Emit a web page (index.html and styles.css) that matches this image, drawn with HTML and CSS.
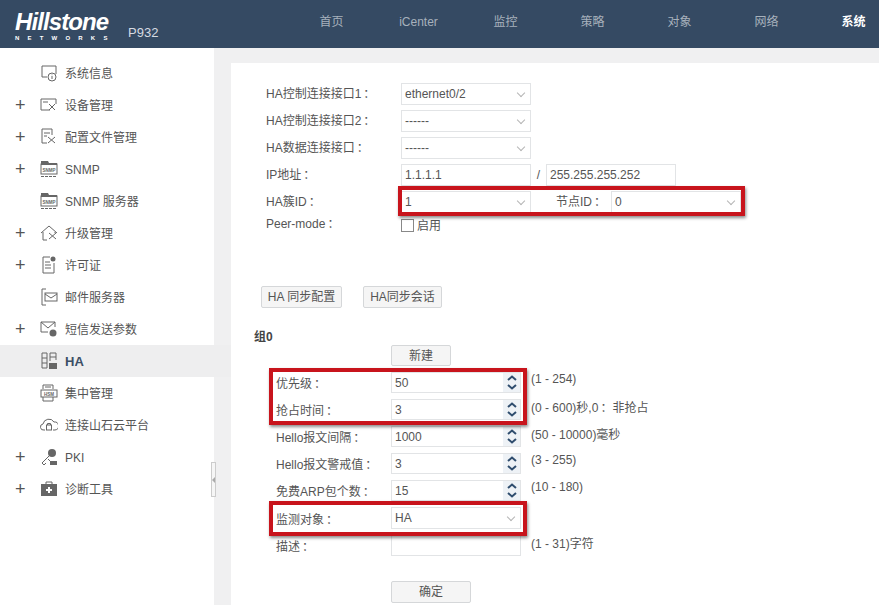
FILE: index.html
```html
<!DOCTYPE html>
<html lang="zh-CN">
<head>
    <meta charset="UTF-8" />
    <title>HA - 系统</title>
    <link rel="stylesheet" href="styles.css">
</head>
<body>
    <header class="topbar">
        <div class="logo">
            <div class="logo-name">Hillstone</div>
            <div class="logo-sub">NETWORKS</div>
        </div>
        <div class="model">P932</div>
        <nav class="nav">
            <a>首页</a>
            <a>iCenter</a>
            <a>监控</a>
            <a>策略</a>
            <a>对象</a>
            <a>网络</a>
            <a class="active">系统</a>
        </nav>
    </header>

    <div class="page">
        <aside class="sidebar">
            <div class="menu-item">
                <span class="plus"></span>
                <svg class="icon" viewBox="0 0 18 18"><path d="M7 13H2V2h14v8"/><circle cx="12" cy="13" r="4"/><path d="M12 12v3M12 10.600v.6"/></svg>
                <span class="menu-text">系统信息</span>
            </div>
            <div class="menu-item">
                <span class="plus">+</span>
                <svg class="icon" viewBox="0 0 18 18"><path d="M16 8V3H1v11h9"/><path d="M3 6h5M9 8l6 6M15 8l-6 6"/></svg>
                <span class="menu-text">设备管理</span>
            </div>
            <div class="menu-item">
                <span class="plus">+</span>
                <svg class="icon" viewBox="0 0 18 18"><path d="M7 15H2V1h10v6"/><path d="M4 5h6M4 8h3M8 9l7 6M15 9l-7 6"/></svg>
                <span class="menu-text">配置文件管理</span>
            </div>
            <div class="menu-item">
                <span class="plus">+</span>
                <svg class="icon" viewBox="0 0 18 18"><path class="solid" d="M1 1h7l1 2h8v2H1z"/><rect x="1" y="4" width="16" height="10"/><path d="M1 16.500h16" stroke-dasharray="3 1"/><text class="icon-text" x="9" y="11.500">SNMP</text></svg>
                <span class="menu-text">SNMP</span>
            </div>
            <div class="menu-item">
                <span class="plus"></span>
                <svg class="icon" viewBox="0 0 18 18"><path class="solid" d="M1 1h7l1 2h8v2H1z"/><rect x="1" y="4" width="16" height="10"/><path d="M1 16.500h16" stroke-dasharray="3 1"/><text class="icon-text" x="9" y="11.500">SNMP</text></svg>
                <span class="menu-text">SNMP 服务器</span>
            </div>
            <div class="menu-item">
                <span class="plus">+</span>
                <svg class="icon" viewBox="0 0 18 18"><path d="M1 9l8-7 8 7M3 8v8h4M15 8v1"/><path d="M9 9l7 6M16 9l-7 6"/></svg>
                <span class="menu-text">升级管理</span>
            </div>
            <div class="menu-item">
                <span class="plus">+</span>
                <svg class="icon" viewBox="0 0 18 18"><path d="M10 1H3v16h11V7"/><path d="M5 6h5M5 9h6M5 12h6"/><circle class="solid" cx="13" cy="3" r="2.500"/></svg>
                <span class="menu-text">许可证</span>
            </div>
            <div class="menu-item">
                <span class="plus"></span>
                <svg class="icon" viewBox="0 0 18 18"><path d="M6 1H2v16h4"/><rect x="5" y="5" width="12" height="8"/><path d="M5 6l6 4 6-4"/></svg>
                <span class="menu-text">邮件服务器</span>
            </div>
            <div class="menu-item">
                <span class="plus">+</span>
                <svg class="icon" viewBox="0 0 18 18"><path d="M8 12H1V2h14v5M1 2l7 6 7-6"/><circle class="solid" cx="13" cy="13" r="3.500"/></svg>
                <span class="menu-text">短信发送参数</span>
            </div>
            <div class="menu-item current">
                <span class="plus"></span>
                <svg class="icon" viewBox="0 0 18 18"><path d="M7 16H2V1h5zM2 6h5M2 11h5M10 9V1h6v7M10 5h6"/><rect class="solid" x="9" y="11" width="8" height="6"/></svg>
                <span class="menu-text">HA</span>
            </div>
            <div class="menu-item">
                <span class="plus"></span>
                <svg class="icon" viewBox="0 0 18 18"><path d="M3 5V1h10v4M3 13v4h10v-4M5 3h6"/><rect x="1" y="6" width="16" height="7"/><text class="icon-text" x="9" y="11.500">HSM</text></svg>
                <span class="menu-text">集中管理</span>
            </div>
            <div class="menu-item">
                <span class="plus"></span>
                <svg class="icon" viewBox="0 0 18 18"><path d="M5 14H4a3 3 0 0 1-1-6 6 6 0 0 1 11-2 4 4 0 0 1 1 8h-2"/><rect x="6.500" y="9" width="5" height="5"/><path d="M7.500 9V7.500h3V9"/></svg>
                <span class="menu-text">连接山石云平台</span>
            </div>
            <div class="menu-item">
                <span class="plus">+</span>
                <svg class="icon" viewBox="0 0 18 18"><circle class="solid" cx="12" cy="5" r="4"/><path d="M9 8l-7 7 2 2 2-2M8 11l2 2"/><rect class="solid" x="10" y="13" width="7" height="4"/></svg>
                <span class="menu-text">PKI</span>
            </div>
            <div class="menu-item">
                <span class="plus">+</span>
                <svg class="icon" viewBox="0 0 18 18"><path d="M6 4V2h6v2"/><rect class="solid" x="1" y="4" width="16" height="12"/><path class="white" d="M8 7h2v2h2v2h-2v2H8v-2H6V9h2z"/></svg>
                <span class="menu-text">诊断工具</span>
            </div>
            <div class="splitter"><span></span></div>
        </aside>

        <main class="main">
            <div class="panel">
                <section class="base-form">
                    <div class="field">
                        <label>HA控制连接接口1<span class="colon">：</span></label>
                        <div class="select">ethernet0/2</div>
                    </div>
                    <div class="field">
                        <label>HA控制连接接口2<span class="colon">：</span></label>
                        <div class="select">------</div>
                    </div>
                    <div class="field">
                        <label>HA数据连接接口<span class="colon">：</span></label>
                        <div class="select">------</div>
                    </div>
                    <div class="field">
                        <label>IP地址<span class="colon">：</span></label>
                        <div class="input">1.1.1.1</div>
                        <span class="slash">/</span>
                        <div class="input">255.255.255.252</div>
                    </div>
                    <div class="field">
                        <label>HA簇ID<span class="colon">：</span></label>
                        <div class="select">1</div>
                        <label class="inline-label">节点ID<span class="colon">：</span></label>
                        <div class="select">0</div>
                    </div>
                    <div class="field peer">
                        <label>Peer-mode<span class="colon">：</span></label>
                        <span class="checkbox"></span>
                        <span class="check-text">启用</span>
                    </div>
                </section>

                <div class="sync-buttons">
                    <button class="btn">HA 同步配置</button>
                    <button class="btn">HA同步会话</button>
                </div>

                <section class="group">
                    <h3>组0</h3>
                    <button class="btn new-btn">新建</button>
                    <div class="group-rows">
                        <div class="field">
                            <label>优先级<span class="colon">：</span></label>
                            <div class="input">50
                                <span class="spin">
                                    <svg viewBox="0 0 10 6"><path d="M1 5l4-3.500L9 5"/></svg>
                                    <svg viewBox="0 0 10 6"><path d="M1 1l4 3.500L9 1"/></svg>
                                </span>
                            </div>
                            <span class="hint">(1 - 254)</span>
                        </div>
                        <div class="field">
                            <label>抢占时间<span class="colon">：</span></label>
                            <div class="input">3
                                <span class="spin">
                                    <svg viewBox="0 0 10 6"><path d="M1 5l4-3.500L9 5"/></svg>
                                    <svg viewBox="0 0 10 6"><path d="M1 1l4 3.500L9 1"/></svg>
                                </span>
                            </div>
                            <span class="hint near">(0 - 600)秒,0<span class="colon">：</span>非抢占</span>
                        </div>
                        <div class="field">
                            <label>Hello报文间隔<span class="colon">：</span></label>
                            <div class="input">1000
                                <span class="spin">
                                    <svg viewBox="0 0 10 6"><path d="M1 5l4-3.500L9 5"/></svg>
                                    <svg viewBox="0 0 10 6"><path d="M1 1l4 3.500L9 1"/></svg>
                                </span>
                            </div>
                            <span class="hint near">(50 - 10000)毫秒</span>
                        </div>
                        <div class="field">
                            <label>Hello报文警戒值<span class="colon">：</span></label>
                            <div class="input">3
                                <span class="spin">
                                    <svg viewBox="0 0 10 6"><path d="M1 5l4-3.500L9 5"/></svg>
                                    <svg viewBox="0 0 10 6"><path d="M1 1l4 3.500L9 1"/></svg>
                                </span>
                            </div>
                            <span class="hint">(3 - 255)</span>
                        </div>
                        <div class="field">
                            <label>免费ARP包个数<span class="colon">：</span></label>
                            <div class="input">15
                                <span class="spin">
                                    <svg viewBox="0 0 10 6"><path d="M1 5l4-3.500L9 5"/></svg>
                                    <svg viewBox="0 0 10 6"><path d="M1 1l4 3.500L9 1"/></svg>
                                </span>
                            </div>
                            <span class="hint">(10 - 180)</span>
                        </div>
                        <div class="field tall">
                            <label>监测对象<span class="colon">：</span></label>
                            <div class="select">HA</div>
                        </div>
                        <div class="field">
                            <label>描述<span class="colon">：</span></label>
                            <div class="input"></div>
                            <span class="hint near">(1 - 31)字符</span>
                        </div>
                    </div>
                    <button class="btn ok-btn">确定</button>
                </section>

                <div class="mark mark-id"></div>
                <div class="mark mark-priority"></div>
                <div class="mark mark-monitor"></div>
            </div>
        </main>
    </div>
</body>
</html>
```

FILE: styles.css
```css
* { box-sizing: border-box; }
html, body { height: 100%; }
body {
    margin: 0;
    overflow: hidden;
    font-family: "Liberation Sans", "Noto Sans CJK SC", sans-serif;
    font-size: 12px;
    line-height: 14px;
    color: #555;
    background: #fff;
}
.colon { padding-left: 2px; font-family: "Noto Sans CJK TC", sans-serif; }

.topbar {
    display: flex;
    align-items: flex-start;
    height: 48px;
    background: #354a63;
    color: #fff;
}
.logo { flex: none; width: 128px; padding: 9px 0 0 15px; }
.logo-name {
    font-size: 24px;
    line-height: 25px;
    font-weight: bold;
    font-style: italic;
    letter-spacing: -0.900px;
}
.logo-sub {
    margin-top: 1px;
    font-size: 6px;
    line-height: 7px;
    font-weight: bold;
    letter-spacing: 8.200px;
}
.model { flex: none; width: 160px; padding-top: 26px; font-size: 13px; line-height: 14px; color: #d5dbe2; }
.nav { display: flex; flex: none; }
.nav a {
    flex: none;
    width: 87px;
    line-height: 45px;
    text-align: center;
    color: #a7b1bc;
}
.nav a.active { color: #fff; font-weight: bold; }

.page { display: flex; height: 557px; }

.sidebar { position: relative; flex: none; width: 214px; padding-top: 9px; background: #fff; }
.menu-item {
    display: flex;
    align-items: center;
    height: 32px;
    color: #555;
}
.menu-text { padding-top: 2px; }
.menu-item.current {
    width: 231px;
    background: #eeeeef;
    color: #3c4f66;
    font-weight: bold;
    font-size: 13px;
    position: relative;
}
.plus {
    width: 40px;
    padding-left: 15px;
    font-size: 18px;
    line-height: 18px;
    color: #555;
}
.icon {
    width: 18px;
    height: 18px;
    margin-right: 7px;
    fill: none;
    stroke: #666;
    stroke-width: 1;
}
.icon .solid { fill: #666; stroke: none; }
.icon .white { fill: #fff; stroke: none; }
.icon-text {
    font-size: 4.500px;
    font-weight: bold;
    text-anchor: middle;
    fill: #666;
    stroke: none;
}
.splitter {
    position: absolute;
    left: 211px;
    top: 414px;
    width: 5px;
    height: 35px;
    border: 1px solid #ccc;
    background: #f6f6f6;
    display: flex;
    align-items: center;
    justify-content: center;
}
.splitter span {
    border-right: 3px solid #aaa;
    border-top: 3px solid transparent;
    border-bottom: 3px solid transparent;
}

.main { flex: 1; padding: 15px 0 0 17px; background: #f0f0f1; }
.panel { position: relative; height: 100%; background: #fff; }

.field { display: flex; align-items: center; height: 22px; margin-bottom: 5px; }
.field label { flex: none; }
.base-form { padding: 20px 0 0 35px; }
.base-form .field label { width: 135px; padding-bottom: 2px; }
.base-form .field label.inline-label { width: 55px; margin-left: 25px; }

.select, .input {
    position: relative;
    flex: none;
    width: 130px;
    height: 100%;
    padding-left: 3px;
    border: 1px solid #e2e4e6;
    background: #fff;
    line-height: 20px;
    color: #555;
}
.select::after {
    content: "";
    position: absolute;
    right: 6px;
    top: 6px;
    width: 5px;
    height: 5px;
    border-right: 1px solid #b5b5b5;
    border-bottom: 1px solid #b5b5b5;
    transform: rotate(45deg);
}
.slash { width: 15px; text-align: center; }
.peer { height: 14px; margin-bottom: 0; }
.peer label { position: relative; top: -1px; }
.checkbox {
    width: 13px;
    height: 13px;
    margin-right: 3px;
    border: 1px solid #888;
    background: #fff;
}
.check-text { padding-top: 2px; }

.btn {
    height: 22px;
    padding: 0;
    border: 1px solid #d5d7d9;
    border-radius: 2px;
    background: #f5f5f5;
    font: inherit;
    color: #555;
}
.sync-buttons { display: flex; gap: 21px; padding: 54px 0 0 30px; }
.sync-buttons .btn:first-child { width: 81px; }
.sync-buttons .btn:last-child { width: 79px; }

.group { padding: 21px 0 0 23px; }
.group h3 { margin: 0; font-size: 12px; line-height: 16px; color: #444; }
.new-btn { display: block; width: 60px; height: 21px; margin-left: 137px; }
.group-rows { padding: 6px 0 0 22px; }
.group-rows .field { height: 21px; margin-bottom: 6px; }
.group-rows .field.tall { height: 22px; }
.group-rows .field label { width: 115px; padding-top: 2px; }
.group-rows .input { line-height: 21px; }
.hint { margin-left: 10px; position: relative; top: -4px; }
.hint.near { top: -2px; }

.spin {
    position: absolute;
    right: 0;
    top: 0;
    bottom: 0;
    width: 17px;
    display: flex;
    flex-direction: column;
    justify-content: space-evenly;
    align-items: center;
    background: #eef2f6;
}
.spin svg {
    width: 10px;
    height: 6px;
    fill: none;
    stroke: #2f4d6e;
    stroke-width: 2;
}
.ok-btn { display: block; width: 80px; height: 22px; margin: 25px 0 0 137px; }

.mark {
    position: absolute;
    border: 4px solid #c8141c;
    box-shadow: 1px 2px 3px rgba(0, 0, 0, 0.45);
}
.mark-id { left: 167px; top: 123px; width: 347px; height: 30px; }
.mark-priority { left: 38px; top: 305px; width: 258px; height: 57px; }
.mark-monitor { left: 38px; top: 438px; width: 258px; height: 35px; }
```
